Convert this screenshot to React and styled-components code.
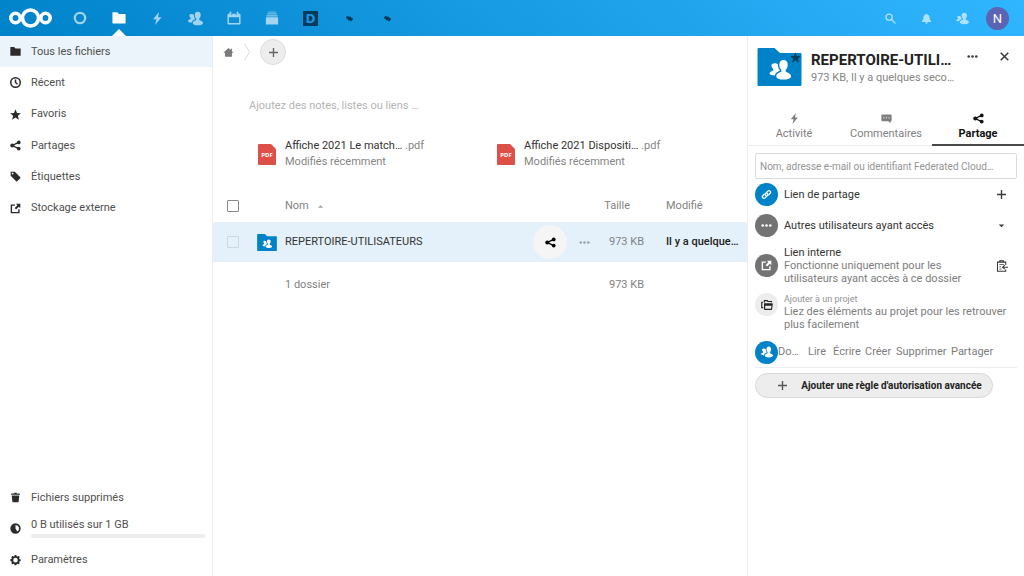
import React from "react";
import styled, { createGlobalStyle, css } from "styled-components";

const Global = createGlobalStyle`
  *, *::before, *::after { box-sizing: border-box; }
  body {
    margin: 0;
    background: #fff;
    color: #222;
    font-family: Roboto, "Open Sans", sans-serif;
    font-size: 11px;
    line-height: 16px;
  }
  button, input { font: inherit; color: inherit; }
  a { color: inherit; text-decoration: none; }
`;

/* ---------- icons ---------- */

const Svg = styled.svg`
  display: block;
  flex: none;
  width: ${(p) => p.$size || 11}px;
  height: ${(p) => p.$size || 11}px;
  fill: currentColor;
`;

const people = (
  <>
    <path d="M10.400 .8c1.900 0 3.100 1.300 3.100 3.200 0 1.700-.5 3.200-1.500 4v1.500c1 .5 4 1.300 4 3.200 0 1.500-2.400 2.500-5.600 2.500S5 14.200 5 12.700c0-1.900 2.700-2.700 3.800-3.200V8c-1-.8-1.500-2.300-1.500-4C7.300 2.100 8.500.8 10.400.8z" />
    <path d="M4 3.200c.9 0 1.700.3 2.200.9.1 1.700.5 3.200 1.400 4.300v.3C5.900 9.300 4.200 10.300 4 12.300 1.600 12.200 0 11.700 0 10.800c0-1.200 1.900-1.800 2.800-2.200V7.400C2 6.800 1.400 5.700 1.400 4.900 1.400 3.800 2.600 3.200 4 3.200z" />
  </>
);

const shapes = {
  folder: <path d="M1 1.500C.7 1.500.5 1.700.5 2v11.700c0 .3.200.5.500.5h14c.3 0 .5-.2.500-.5V4c0-.3-.2-.5-.5-.5H8l-2-2z" />,
  circle: <circle cx="8" cy="8" r="5.900" fill="none" stroke="currentColor" strokeWidth="2.700" />,
  bolt: <path d="M10 0 2.500 9h4.200L5 16l8-9.500H8.700z" />,
  people,
  contacts: (
    <>
      <path d="M10.200 1c2 0 3.200 1.300 3.200 3.200 0 1.600-.5 3-1.500 3.800v1.500c1 .5 4 1 4 3.200 0 1.500-2.400 2.300-5.600 2.300s-5.600-.8-5.600-2.300c0-2.200 2.900-2.700 3.900-3.200V8c-1-.8-1.600-2.200-1.600-3.800C7 2.300 8.200 1 10.200 1z" />
      <path d="M4 5c.9 0 1.600.3 2.100 1 .3 1 .7 1.800 1.300 2.500C5.500 9.200 4.200 9.800 3.700 11.500 1.400 11.400 0 11 0 10.400c0-.9 1.800-1.300 2.600-1.700V8C2 7.500 1.700 6.900 1.700 6.400 1.700 5.500 2.700 5 4 5z" />
    </>
  ),
  calendar: (
    <path
      fillRule="evenodd"
      d="M4 .5c-.6 0-1 .4-1 1V3H2C1 3 .5 3.700.5 4.500V14c0 .9.600 1.500 1.500 1.500h12c.9 0 1.500-.6 1.500-1.500V4.500C15.500 3.700 15 3 14 3h-1V1.500c0-.6-.4-1-1-1s-1 .4-1 1V4.500h-1V3H6v1.500H5v-3c0-.6-.4-1-1-1zM2.200 7h11.600v6.800H2.200z"
    />
  ),
  deck: (
    <>
      <rect x="1" y="7" width="14" height="8.500" rx="1" />
      <rect x="1.500" y="4.800" width="13" height="1.500" rx=".6" opacity=".85" />
      <rect x="2.500" y="2.600" width="11" height="1.500" rx=".6" opacity=".7" />
      <rect x="3.500" y=".5" width="9" height="1.500" rx=".6" opacity=".55" />
    </>
  ),
  plug: <path d="M2 5.500 5 3l3 2.200 2-.7 2.200 3H14l.5 1.500-3.500 4.500L8.500 11l-2.500.5L4 8.500l-2-.5z" />,
  search: (
    <g fill="none" stroke="currentColor" strokeWidth="1.900" strokeLinecap="round">
      <circle cx="6" cy="6" r="4.500" />
      <path d="m9.500 9.500 5 5" />
    </g>
  ),
  bell: <path d="M8 1C7.200 1 6.700 1.500 6.700 2.200 4.700 2.800 3.500 4.500 3.500 6.500c0 3-.8 4.300-2.300 5.200v1.300h13.600v-1.300c-1.500-.9-2.300-2.200-2.300-5.200 0-2-1.200-3.700-3.200-4.300C9.300 1.500 8.800 1 8 1zM6 13.500a2 2 0 0 0 4 0z" />,
  clock: (
    <g fill="none" stroke="currentColor" strokeWidth="2.200">
      <circle cx="8" cy="8" r="6.900" />
      <path d="M8 3.500V8l3 2.500" />
    </g>
  ),
  star: <path d="m8 .5 2.200 5.200 5.600.4-4.300 3.700 1.400 5.700L8 12.400l-4.900 3.100 1.400-5.700L.2 6.100l5.600-.4z" />,
  share: (
    <g>
      <path d="m12.500 3.500-9 4.500 9 4.500" fill="none" stroke="currentColor" strokeWidth="2" />
      <circle cx="12.700" cy="3.500" r="2.700" />
      <circle cx="3.300" cy="8" r="2.900" />
      <circle cx="12.700" cy="12.500" r="2.700" />
    </g>
  ),
  tag: (
    <path fillRule="evenodd" d="M1.500 1 1 1.500V7l8 8c.4.400 1 .4 1.400 0L15 10.400c.4-.4.400-1 0-1.400L7 1zm2.300 1.500a1.300 1.300 0 1 1 0 2.600 1.300 1.300 0 0 1 0-2.600z" />
  ),
  external: (
    <>
      <path d="M7 3H2v11h11V9" fill="none" stroke="currentColor" strokeWidth="2" />
      <path d="M8.500 1H15v6.500l-2.200-2.200-4 4-2-2 4-4z" />
    </>
  ),
  trash: <path d="M6.500 1 6 2H2.500c-.5 0-1 .500-1 1v1h13V3c0-.5-.5-1-1-1H10L9.500 1zM2.500 5l1 9c.1.600.500 1 1 1h7c.5 0 .9-.4 1-1l1-9z" />,
  quota: (
    <path fillRule="evenodd" d="M8 .5a7.500 7.500 0 1 0 0 15A7.500 7.500 0 0 0 8 .5zm0 2.300a5.200 5.200 0 0 1 2.600 9.700L8 8z" />
  ),
  gear: (
    <path d="M6.938 0A.43.43 0 0 0 6.500.438v1.250a5.818 5.818 0 0 0-1.530.656l-.907-.906a.436.436 0 0 0-.625 0l-1.500 1.500a.436.436 0 0 0 0 .624l.906.907c-.285.480-.514.976-.656 1.530H.938a.43.43 0 0 0-.438.438v2.125C.5 8.810.69 9 .938 9h1.250a5.820 5.820 0 0 0 .656 1.530l-.907.907a.436.436 0 0 0 0 .625l1.500 1.500c.176.176.450.176.625 0l.907-.907c.480.285.976.514 1.530.656v1.250c0 .250.190.438.437.438h2.125a.43.43 0 0 0 .438-.438v-1.250a5.820 5.820 0 0 0 1.530-.657l.907.907c.176.175.450.175.625 0l1.500-1.500a.436.436 0 0 0 0-.625l-.906-.906A5.790 5.790 0 0 0 13.812 9h1.250a.43.43 0 0 0 .438-.438V6.437A.43.43 0 0 0 15.062 6h-1.250a5.790 5.790 0 0 0-.656-1.532l.906-.906a.436.436 0 0 0 0-.625l-1.500-1.500a.436.436 0 0 0-.625 0l-.906.906A5.816 5.816 0 0 0 9.500 1.688V.438A.43.43 0 0 0 9.062 0zM8 4.157a3.344 3.344 0 0 1 0 6.686 3.344 3.344 0 0 1 0-6.686z" />
  ),
  home: <path d="M8 1.500.5 8.500H3V14h10V8.500h2.500L13 6.200V2.500h-2v1.700z" />,
  plus: <path d="M7 1.500h2V7h5.500v2H9v5.500H7V9H1.500V7H7z" />,
  dots: (
    <>
      <circle cx="2.500" cy="8" r="1.900" />
      <circle cx="8" cy="8" r="1.900" />
      <circle cx="13.500" cy="8" r="1.900" />
    </>
  ),
  close: <path d="m2.500 2.500 11 11m0-11-11 11" fill="none" stroke="currentColor" strokeWidth="2.200" />,
  comment: (
    <path fillRule="evenodd" d="M2 2C1 2 .5 2.700.5 3.500v7c0 .8.500 1.500 1.500 1.500h8.500l3.500 3v-3c1 0 1.500-.7 1.500-1.500v-7c0-.8-.5-1.500-1.500-1.500zm1.500 4.300h1.400v1.400H3.500zm3.800 0h1.400v1.400H7.300zm3.800 0h1.400v1.400h-1.400z" />
  ),
  link: (
    <g fill="none" stroke="currentColor" strokeWidth="1.900" strokeLinecap="round">
      <path d="M7 9.500c-1.300-1.300-1-2.400 0-3.400l3-3c1-1 2.500-1 3.300 0 .9.900.900 2.200 0 3.200l-2 2" />
      <path d="M9 6.500c1.300 1.300 1 2.400 0 3.400l-3 3c-1 1-2.500 1-3.300 0-.9-.9-.9-2.200 0-3.200l2-2" />
    </g>
  ),
  down: <path d="M3 6h10l-5 5z" />,
  up: <path d="m2 11 6-6 6 6z" />,
  clipboard: (
    <g fill="none" stroke="currentColor" strokeWidth="1.400">
      <path d="M13 6.500V2.800H2V15h11v-2.500M5 3V1h5v2" />
      <path d="M4.500 6h6M4.500 9H7M4.500 12h3" strokeWidth="1" />
      <path d="M16 9.600H8.800m2.900-2.700-2.900 2.700 2.900 2.700" />
    </g>
  ),
  projects: (
    <>
      <path fillRule="evenodd" d="M4 5.500h10.500c.8 0 1.300.5 1.200 1.300l-.9 6.700c-.1.600-.5 1-1.100 1H5c-.6 0-1-.4-1-1zM5.600 9v4h7.800l.6-4z" />
      <path d="M3 11.500H1V4.500h1.500M4.500 4.500V2.200h3.700l1 1.100H14v1" fill="none" stroke="currentColor" strokeWidth="1.500" />
    </>
  ),
};

const Icon = ({ name, size }) => (
  <Svg $size={size} viewBox="0 0 16 16" aria-hidden="true">
    {shapes[name]}
  </Svg>
);

const CloudLogo = () => (
  <svg width="44" height="22" viewBox="0 0 44 22" fill="none" stroke="#fff" strokeWidth="3.600" role="img" aria-label="Nextcloud">
    <circle cx="22.500" cy="11" r="8" />
    <circle cx="7.500" cy="11" r="4.700" />
    <circle cx="37.500" cy="11" r="4.700" />
  </svg>
);

const DashLogo = () => (
  <svg width="15" height="15" viewBox="0 0 15 15" aria-hidden="true">
    <rect width="15" height="15" fill="#073a5b" />
    <text x="7.500" y="12" textAnchor="middle" fontFamily="DejaVu Sans" fontWeight="700" fontSize="12" fill="#1795e0">D</text>
  </svg>
);

const PdfIcon = () => (
  <svg width="18" height="21" viewBox="0 0 18 21" aria-hidden="true">
    <path d="M1 0h12l5 5v15a1 1 0 0 1-1 1H1a1 1 0 0 1-1-1V1a1 1 0 0 1 1-1z" fill="#de4f47" />
    <text x="9" y="13" textAnchor="middle" fontFamily="Noto Sans" fontWeight="700" fontSize="6" fill="#fff">PDF</text>
  </svg>
);

const FolderSvg = styled.svg`
  display: block;
`;

const SharedFolder = ({ width, height }) => (
  <FolderSvg width={width} height={height} viewBox="0 0 44 38" aria-hidden="true">
    <path d="M1 0h16l5.500 5H43a1 1 0 0 1 1 1v31a1 1 0 0 1-1 1H1a1 1 0 0 1-1-1V1a1 1 0 0 1 1-1z" fill="#0082c9" />
    <g transform="translate(12 11) scale(1.350)" fill="#fff">{people}</g>
  </FolderSvg>
);

/* ---------- top bar ---------- */

const TopBar = styled.header`
  display: flex;
  align-items: center;
  justify-content: space-between;
  height: 36px;
  padding: 0 9px 0 8px;
  background: linear-gradient(40deg, #0082c9 0%, #30b6ff 100%);
  color: #fff;
`;

const BarGroup = styled.nav`
  display: flex;
  align-items: center;
  height: 100%;
`;

const AppGrid = styled.div`
  display: grid;
  grid-template-columns: repeat(9, 1fr);
  width: 346px;
  height: 100%;
`;

const LogoLink = styled.a`
  display: flex;
  margin-right: 9px;
`;

const AppLink = styled.a`
  position: relative;
  display: grid;
  place-items: center;
  width: ${(p) => (p.$width ? `${p.$width}px` : "auto")};
  height: 100%;
  color: ${(p) => (p.$dark ? "#073a5b" : "#fff")};
  & > svg { opacity: ${(p) => (p.$active || p.$dark ? 1 : 0.62)}; }
  ${(p) => p.$active && css`
    &::after {
      content: "";
      position: absolute;
      bottom: 0;
      border: 7px solid transparent;
      border-top-width: 0;
      border-bottom-color: #fff;
    }
  `}
`;

const Avatar = styled.button`
  width: 23px;
  height: 23px;
  margin: 0 6px;
  padding: 0;
  border: 0;
  border-radius: 50%;
  background: #5b64b3;
  color: #fff;
  font-size: 13px;
  line-height: 23px;
`;

/* ---------- page ---------- */

const Page = styled.div`
  display: flex;
  flex-direction: column;
  min-height: 100vh;
`;

const Body = styled.div`
  display: flex;
  flex: 1;
`;

const Sidebar = styled.nav`
  display: flex;
  flex-direction: column;
  justify-content: space-between;
  flex: 0 0 213px;
  border-right: 1px solid #ededed;
`;

const NavList = styled.ul`
  display: grid;
  grid-auto-rows: 1fr;
  height: ${(p) => p.$height}px;
  margin: 0;
  padding: 0;
  list-style: none;
`;

const NavLink = styled.a`
  display: flex;
  align-items: center;
  gap: 10px;
  height: 100%;
  padding: 0 7px 0 10px;
  background: ${(p) => (p.$active ? "#ebf4fb" : "transparent")};
  color: #4f4f4f;
  svg { color: #2b2b2b; }
`;

const Quota = styled.span`
  flex: 1;
  display: flex;
  flex-direction: column;
  gap: 1px;
  padding-bottom: 2px;
`;

const QuotaBar = styled.span`
  height: 4px;
  border-radius: 2px;
  background: #ededed;
`;

/* ---------- files ---------- */

const Files = styled.main`
  flex: 1;
  min-width: 0;
`;

const Crumbs = styled.div`
  display: flex;
  align-items: center;
  gap: 10px;
  height: 32px;
  padding-left: 10px;
  color: #7a7a7a;
`;

const Chevron = styled.svg`
  width: 6px;
  height: 18px;
  fill: none;
  stroke: #dcdcdc;
`;

const RoundButton = styled.button`
  display: grid;
  place-items: center;
  flex: none;
  width: ${(p) => p.$size}px;
  height: ${(p) => p.$size}px;
  padding: 0;
  border: ${(p) => (p.$border ? "1px solid #dbdbdb" : "0")};
  border-radius: 50%;
  background: ${(p) => p.$bg || "transparent"};
  color: ${(p) => p.$color || "#3a3a3a"};
`;

const Notes = styled.p`
  margin: 30px 0 24px 36px;
  color: #b4b4b4;
`;

const Recent = styled.div`
  display: grid;
  grid-template-columns: 1fr 1fr;
  padding: 0 11px 0 45px;
`;

const RecentCard = styled.a`
  display: flex;
  align-items: center;
  gap: 9px;
  white-space: nowrap;
`;

const Muted = styled.span`
  color: #858585;
`;

const RecentText = styled.span`
  display: flex;
  flex-direction: column;
`;

const FileTable = styled.table`
  width: 100%;
  margin-top: 20px;
  border-collapse: collapse;
  table-layout: fixed;
  white-space: nowrap;
  th, td { padding: 0; font-weight: 400; text-align: left; color: #828282; }
`;

const HeadRow = styled.tr`
  height: 32px;
`;

const FileRow = styled.tr`
  height: 40px;
  background: #e4f1fa;
`;

const SumRow = styled.tr`
  height: 46px;
`;

const Col = styled.col`
  width: ${(p) => (p.$width ? `${p.$width}px` : "auto")};
`;

const CheckCell = styled.td`
  && { padding-left: 14px; }
`;

const Check = styled.input.attrs({ type: "checkbox" })`
  appearance: none;
  display: block;
  width: 12px;
  height: 12px;
  margin: 0;
  border: 1px solid ${(p) => (p.$faint ? "#ccd7de" : "#878787")};
  border-radius: 1px;
`;

const SortLabel = styled.span`
  display: inline-flex;
  align-items: center;
  gap: 8px;
  svg { color: #a0a0a0; }
`;

const SizeHead = styled.th`
  && { padding-right: 14px; text-align: right; }
`;

const SizeCell = styled.td`
  && { text-align: right; }
`;

const DateHead = styled.th`
  && { padding-left: 22px; }
`;

const DateCell = styled.td`
  && { padding-left: 22px; color: #222; font-weight: 500; }
`;

const FileName = styled.span`
  color: #333;
`;

const RowActions = styled.div`
  display: flex;
  align-items: center;
  justify-content: flex-end;
`;

/* ---------- details ---------- */

const Details = styled.aside`
  flex: 0 0 277px;
  min-width: 0;
  border-left: 1px solid #ededed;
`;

const DetailsHead = styled.div`
  display: flex;
  gap: 9px;
  height: 69px;
  padding: 12px 12px 0 9px;
  white-space: nowrap;
`;

const Thumb = styled.div`
  position: relative;
  width: 45px;
  height: 38px;
  & > svg:last-child {
    position: absolute;
    top: 4px;
    right: 1px;
    color: #063f60;
  }
`;

const Titles = styled.div`
  flex: 1;
  min-width: 0;
`;

const Title = styled.h2`
  margin: 2px 0 0;
  font-size: 15px;
  line-height: 20px;
  font-weight: 700;
`;

const HeadActions = styled.div`
  display: flex;
  gap: 16px;
  height: 16px;
`;

const Tabs = styled.div`
  display: grid;
  grid-template-columns: repeat(3, 1fr);
  height: 41px;
`;

const Tab = styled.button`
  display: flex;
  flex-direction: column;
  align-items: center;
  justify-content: flex-end;
  gap: 2px;
  padding: 0 0 ${(p) => (p.$active ? 2 : 3)}px;
  border: 0;
  border-bottom: ${(p) => (p.$active ? "2px solid #4a4a4a" : "1px solid #ededed")};
  background: none;
  color: ${(p) => (p.$active ? "#111" : "#808080")};
  font-weight: ${(p) => (p.$active ? 700 : 400)};
`;

const Panel = styled.div`
  padding: 7px 7px 0;
`;

const SearchInput = styled.input`
  display: block;
  width: 100%;
  height: 26px;
  padding: 0 4px;
  border: 1px solid #dbdbdb;
  border-radius: 2px;
  outline: 0;
  font-size: 10px;
  &::placeholder { color: #949494; opacity: 1; }
`;

const ShareRow = styled.div`
  display: flex;
  align-items: ${(p) => (p.$top ? "flex-start" : "center")};
  gap: 6px;
  min-height: ${(p) => p.$height || 31}px;
  padding-top: ${(p) => (p.$top ? 3 : 0)}px;
`;

const Badge = styled.span`
  display: grid;
  place-items: center;
  flex: none;
  width: 23px;
  height: 23px;
  border-radius: 50%;
  background: ${(p) => p.$bg};
  color: ${(p) => p.$color || "#fff"};
`;

const ShareText = styled.div`
  flex: 1;
  min-width: 0;
  line-height: 13px;
  white-space: nowrap;
  color: ${(p) => (p.$muted ? "#7d7d7d" : "#333")};
`;

const Small = styled.div`
  color: #929292;
  font-size: 9px;
  line-height: 12px;
`;

const RuleRow = styled.div`
  display: flex;
  align-items: center;
  height: 31px;
  border-bottom: 1px solid #ededed;
  color: #7d7d7d;
  white-space: nowrap;
`;

const Perms = styled.div`
  display: grid;
  grid-template-columns: 30px 25px 32px 31px 55px auto;
`;

const RuleButton = styled.button`
  display: flex;
  align-items: center;
  justify-content: center;
  gap: 13px;
  width: 238px;
  height: 25px;
  margin-top: 5px;
  padding: 0 0 0 11px;
  border: 1px solid #d9d9d9;
  border-radius: 13px;
  background: #ededed;
  font-size: 10px;
  font-weight: 700;
  white-space: nowrap;
  svg { color: #555; }
`;

const APPS = [
  { icon: "circle", label: "Tableau de bord" },
  { icon: "folder", label: "Fichiers", active: true },
  { icon: "bolt", label: "Activité", size: 13 },
  { icon: "people", label: "Contacts", size: 15 },
  { icon: "calendar", label: "Agenda" },
  { icon: "deck", label: "Deck" },
];

const NAV = [
  ["folder", "Tous les fichiers"],
  ["clock", "Récent"],
  ["star", "Favoris"],
  ["share", "Partages"],
  ["tag", "Étiquettes"],
  ["external", "Stockage externe"],
];

const RECENT = ["Affiche 2021 Le match…", "Affiche 2021 Dispositi…"];

export default function App() {
  return (
    <Page>
      <Global />
      <TopBar>
        <BarGroup>
          <LogoLink href="#"><CloudLogo /></LogoLink>
          <AppGrid>
            {APPS.map((a) => (
              <AppLink key={a.icon} href="#" $active={a.active} aria-label={a.label}>
                <Icon name={a.icon} size={a.size || 14} />
              </AppLink>
            ))}
            <AppLink href="#" $dark aria-label="D"><DashLogo /></AppLink>
            <AppLink href="#" $dark aria-label="Extension"><Icon name="plug" size={9} /></AppLink>
            <AppLink href="#" $dark aria-label="Extension"><Icon name="plug" size={9} /></AppLink>
          </AppGrid>
        </BarGroup>
        <BarGroup>
          <AppLink href="#" $width={36} aria-label="Rechercher"><Icon name="search" size={11} /></AppLink>
          <AppLink href="#" $width={36} aria-label="Notifications"><Icon name="bell" size={11} /></AppLink>
          <AppLink href="#" $width={36} aria-label="Contacts"><Icon name="contacts" size={13} /></AppLink>
          <Avatar>N</Avatar>
        </BarGroup>
      </TopBar>

      <Body>
        <Sidebar>
          <NavList $height={188}>
            {NAV.map(([icon, label], i) => (
              <li key={icon}>
                <NavLink href="#" $active={i === 0}><Icon name={icon} />{label}</NavLink>
              </li>
            ))}
          </NavList>
          <NavList $height={94}>
            <li><NavLink href="#"><Icon name="trash" />Fichiers supprimés</NavLink></li>
            <li>
              <NavLink href="#">
                <Icon name="quota" />
                <Quota>0 B utilisés sur 1 GB<QuotaBar /></Quota>
              </NavLink>
            </li>
            <li><NavLink href="#"><Icon name="gear" />Paramètres</NavLink></li>
          </NavList>
        </Sidebar>

        <Files>
          <Crumbs>
            <a href="#" aria-label="Accueil"><Icon name="home" /></a>
            <Chevron viewBox="0 0 6 18"><path d="m.5.5 5 8.500-5 8.500" /></Chevron>
            <RoundButton $size={26} $border $bg="#ededed" $color="#666" aria-label="Nouveau">
              <Icon name="plus" size={11} />
            </RoundButton>
          </Crumbs>
          <Notes>Ajoutez des notes, listes ou liens …</Notes>
          <Recent>
            {RECENT.map((name) => (
              <RecentCard key={name} href="#">
                <PdfIcon />
                <RecentText>
                  <FileName>{name} <Muted>.pdf</Muted></FileName>
                  <Muted>Modifiés récemment</Muted>
                </RecentText>
              </RecentCard>
            ))}
          </Recent>
          <FileTable>
            <colgroup>
              <Col $width={44} />
              <Col $width={28} />
              <Col />
              <Col $width={70} />
              <Col $width={43} />
              <Col $width={103} />
            </colgroup>
            <thead>
              <HeadRow>
                <CheckCell><Check aria-label="Tout sélectionner" /></CheckCell>
                <td />
                <th><SortLabel>Nom <Icon name="up" size={7} /></SortLabel></th>
                <td />
                <SizeHead>Taille</SizeHead>
                <DateHead>Modifié</DateHead>
              </HeadRow>
            </thead>
            <tbody>
              <FileRow>
                <CheckCell><Check $faint aria-label="Sélectionner REPERTOIRE-UTILISATEURS" /></CheckCell>
                <td><SharedFolder width={20} height={17} /></td>
                <td><FileName>REPERTOIRE-UTILISATEURS</FileName></td>
                <td>
                  <RowActions>
                    <RoundButton $size={34} $bg="#f5f5f5" $color="#000" aria-label="Partager"><Icon name="share" /></RoundButton>
                    <RoundButton $size={34} $color="#9aa5ac" aria-label="Actions"><Icon name="dots" /></RoundButton>
                  </RowActions>
                </td>
                <SizeCell>973 KB</SizeCell>
                <DateCell>Il y a quelque…</DateCell>
              </FileRow>
            </tbody>
            <tfoot>
              <SumRow>
                <td /><td />
                <td>1 dossier</td>
                <td />
                <SizeCell>973 KB</SizeCell>
                <td />
              </SumRow>
            </tfoot>
          </FileTable>
        </Files>

        <Details>
          <DetailsHead>
            <Thumb>
              <SharedFolder width={45} height={38} />
              <Icon name="star" size={11} />
            </Thumb>
            <Titles>
              <Title>REPERTOIRE-UTILI…</Title>
              <Muted>973 KB, Il y a quelques seco…</Muted>
            </Titles>
            <HeadActions>
              <RoundButton $size={16} aria-label="Actions"><Icon name="dots" /></RoundButton>
              <RoundButton $size={16} aria-label="Fermer"><Icon name="close" /></RoundButton>
            </HeadActions>
          </DetailsHead>
          <Tabs role="tablist">
            <Tab role="tab"><Icon name="bolt" />Activité</Tab>
            <Tab role="tab"><Icon name="comment" />Commentaires</Tab>
            <Tab role="tab" $active aria-selected="true"><Icon name="share" />Partage</Tab>
          </Tabs>
          <Panel>
            <SearchInput aria-label="Partager avec" placeholder="Nom, adresse e-mail ou identifiant Federated Cloud…" />
            <ShareRow>
              <Badge $bg="#0082c9"><Icon name="link" /></Badge>
              <ShareText>Lien de partage</ShareText>
              <RoundButton $size={31} aria-label="Créer un lien"><Icon name="plus" /></RoundButton>
            </ShareRow>
            <ShareRow>
              <Badge $bg="#737373"><Icon name="dots" /></Badge>
              <ShareText>Autres utilisateurs ayant accès</ShareText>
              <RoundButton $size={31} aria-label="Afficher"><Icon name="down" size={9} /></RoundButton>
            </ShareRow>
            <ShareRow $height={49}>
              <Badge $bg="#737373"><Icon name="external" /></Badge>
              <ShareText>
                Lien interne
                <ShareText $muted>Fonctionne uniquement pour les<br />utilisateurs ayant accès à ce dossier</ShareText>
              </ShareText>
              <RoundButton $size={31} aria-label="Copier le lien"><Icon name="clipboard" size={12} /></RoundButton>
            </ShareRow>
            <ShareRow $height={47} $top>
              <Badge $bg="#ededed" $color="#222"><Icon name="projects" size={12} /></Badge>
              <ShareText $muted>
                <Small>Ajouter à un projet</Small>
                Liez des éléments au projet pour les retrouver<br />plus facilement
              </ShareText>
            </ShareRow>
            <RuleRow>
              <Badge $bg="#0082c9"><Icon name="people" size={12} /></Badge>
              <Perms>
                <span>Do…</span>
                <span>Lire</span>
                <span>Écrire</span>
                <span>Créer</span>
                <span>Supprimer</span>
                <span>Partager</span>
              </Perms>
            </RuleRow>
            <RuleButton><Icon name="plus" />Ajouter une règle d'autorisation avancée</RuleButton>
          </Panel>
        </Details>
      </Body>
    </Page>
  );
}
